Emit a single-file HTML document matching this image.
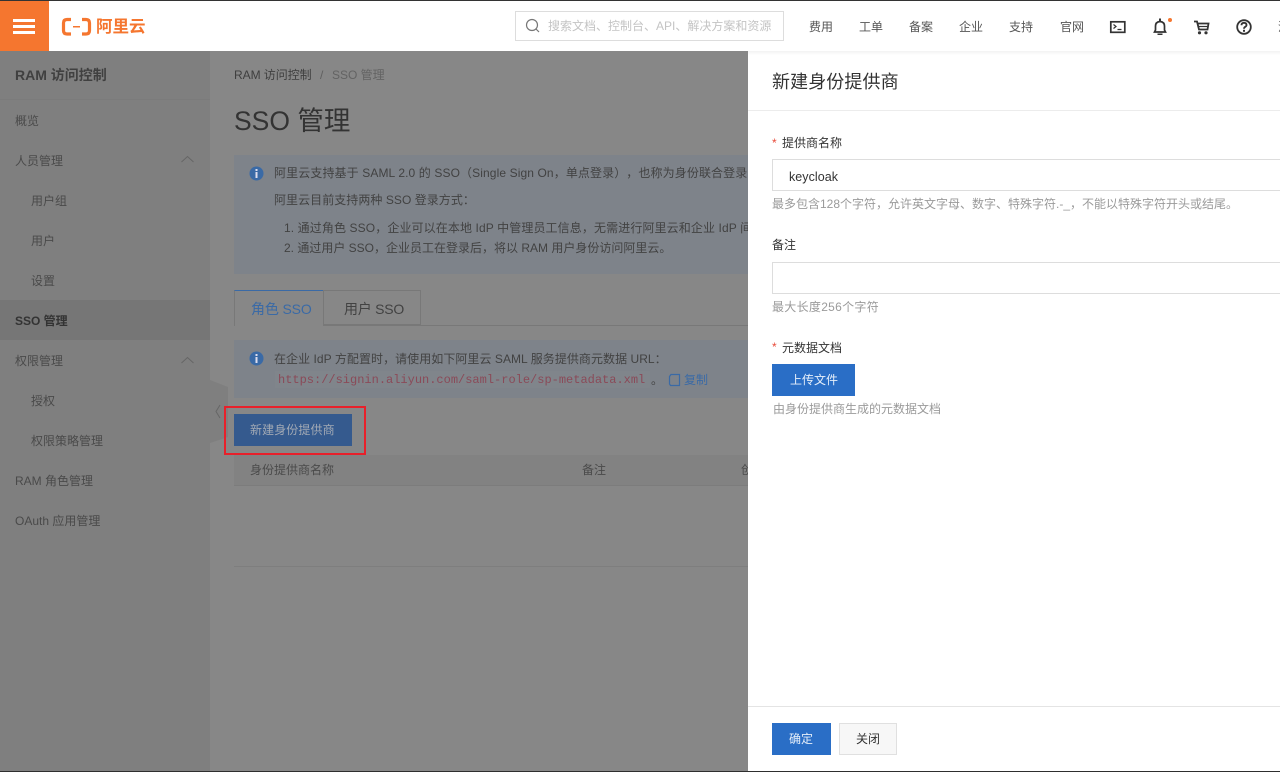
<!DOCTYPE html>
<html lang="zh-CN"><head><meta charset="utf-8"><title>SSO 管理</title>
<style>
html,body{margin:0;padding:0;width:1280px;height:772px;overflow:hidden;background:#878787}
body{position:relative;font-family:"Liberation Sans","Noto Sans CJK SC",sans-serif;font-size:12px;color:#333}
.a{position:absolute;white-space:nowrap;line-height:18px}
.b{position:absolute}
.m{color:#4a4a4a}
.t{color:#424242}
.h{color:#9a9a9a}
.l{color:#333}
</style></head><body>
<!-- sidebar -->
<div class="b" style="left:0;top:51px;width:210px;height:720px;background:#7f7f7f"></div>
<div class="b" style="left:0;top:99px;width:210px;height:1px;background:#7b7b7b"></div>
<div class="b" style="left:0;top:300px;width:210px;height:40px;background:#767676"></div>
<div class="a" style="left:15px;top:66px;font-size:14px;font-weight:bold;color:#404040">RAM 访问控制</div>
<div class="a m" style="left:15px;top:112px">概览</div>
<div class="a m" style="left:15px;top:152px">人员管理</div>
<div class="a m" style="left:31px;top:192px">用户组</div>
<div class="a m" style="left:31px;top:232px">用户</div>
<div class="a m" style="left:31px;top:272px">设置</div>
<div class="a" style="left:15px;top:312px;font-weight:bold;color:#333">SSO 管理</div>
<div class="a m" style="left:15px;top:352px">权限管理</div>
<div class="a m" style="left:31px;top:392px">授权</div>
<div class="a m" style="left:31px;top:432px">权限策略管理</div>
<div class="a m" style="left:15px;top:472px">RAM 角色管理</div>
<div class="a m" style="left:15px;top:512px">OAuth 应用管理</div>
<svg class="b" style="left:180px;top:154px" width="15" height="10"><path d="M1.500 8L7.500 2.500L13.500 8" fill="none" stroke="#666" stroke-width="1"/></svg>
<svg class="b" style="left:180px;top:355px" width="15" height="10"><path d="M1.500 8L7.500 2.500L13.500 8" fill="none" stroke="#666" stroke-width="1"/></svg>
<!-- collapse tab -->
<svg class="b" style="left:210px;top:380px" width="20" height="64"><path d="M0 0L18 7V57L0 63Z" fill="#7f7f7f"/><path d="M10 25L6 31.500L10 38" fill="none" stroke="#666" stroke-width="1"/></svg>
<!-- main -->
<div class="a" style="left:234px;top:66px;color:#3f3f3f;letter-spacing:-.05px">RAM 访问控制</div>
<div class="a" style="left:320px;top:66px;color:#5f5f5f">/</div>
<div class="a" style="left:332px;top:66px;color:#636363">SSO 管理</div>
<div class="a" style="left:234px;top:102px;font-size:26.500px;line-height:38px;color:#333">SSO 管理</div>
<!-- alert 1 -->
<div class="b" style="left:234px;top:155px;width:514px;height:119px;background:#7e838a"></div>
<svg class="b" style="left:249px;top:166px" width="15" height="15"><circle cx="7.500" cy="7.500" r="7" fill="#3a6aa6"/><rect x="6.500" y="3" width="2" height="2" fill="#dde"/><rect x="6.500" y="6" width="2" height="6" fill="#dde"/></svg>
<div class="b" style="left:274px;top:164px;width:474px;height:18px;overflow:hidden"><div class="a t" style="left:0;top:0;letter-spacing:.11px">阿里云支持基于 SAML 2.0 的 SSO（Single Sign On，单点登录<span style="letter-spacing:6px">）</span>，也称为身份联合登录</div></div>
<div class="a t" style="left:274px;top:191px;letter-spacing:.05px">阿里云目前支持两种 SSO 登录方式：</div>
<div class="b" style="left:284px;top:219px;width:464px;height:18px;overflow:hidden"><div class="a t" style="left:0;top:0;letter-spacing:.11px">1. 通过角色 SSO，企业可以在本地 IdP 中管理员工信息，无需进行阿里云和企业 IdP 间的</div></div>
<div class="a t" style="left:284px;top:239px">2. 通过用户 SSO，企业员工在登录后，将以 RAM 用户身份访问阿里云。</div>
<!-- tabs -->
<div class="b" style="left:234px;top:325px;width:514px;height:1px;background:#787878"></div>
<div class="b" style="left:234px;top:290px;width:89px;height:36px;background:#878787;border-top:1px solid #3a6aa6;border-left:1px solid #787878;box-sizing:border-box"></div>
<div class="b" style="left:323px;top:290px;width:98px;height:35px;border:1px solid #787878;box-sizing:border-box"></div>
<div class="a" style="left:251px;top:299px;font-size:14px;line-height:20px;color:#3a6aa6;letter-spacing:-.15px">角色 SSO</div>
<div class="a" style="left:344px;top:299px;font-size:14px;line-height:20px;color:#424242;letter-spacing:-.25px">用户 SSO</div>
<!-- alert 2 -->
<div class="b" style="left:234px;top:340px;width:514px;height:58px;background:#7e838a"></div>
<svg class="b" style="left:249px;top:351px" width="15" height="15"><circle cx="7.500" cy="7.500" r="7" fill="#3a6aa6"/><rect x="6.500" y="3" width="2" height="2" fill="#dde"/><rect x="6.500" y="6" width="2" height="6" fill="#dde"/></svg>
<div class="a t" style="left:274px;top:350px;letter-spacing:.05px">在企业 IdP 方配置时，请使用如下阿里云 SAML 服务提供商元数据 URL：</div>
<div class="b" style="left:275px;top:371px;width:375px;height:17px;background:#80858b"></div>
<div class="a" style="left:278px;top:371px;font-family:'Liberation Mono',monospace;font-size:12px;color:#8a4a58">https://signin.aliyun.com/saml-role/sp-metadata.xml</div>
<div class="a t" style="left:651px;top:371px">。</div>
<svg class="b" style="left:668px;top:373px" width="13" height="14"><path d="M3 1.500H11.500V12.500H2.500L1.500 11V3.500Z" fill="none" stroke="#3a6aa6" stroke-width="1.200"/></svg>
<div class="a" style="left:684px;top:371px;color:#3a6aa6">复制</div>
<!-- button -->
<div class="b" style="left:234px;top:414px;width:118px;height:32px;background:#355a8e"></div>
<div class="a" style="left:250px;top:421px;color:#a2a9b4;letter-spacing:.1px">新建身份提供商</div>
<div class="b" style="left:224px;top:406px;width:142px;height:49px;border:2px solid #e8202a;box-sizing:border-box"></div>
<!-- table -->
<div class="b" style="left:234px;top:455px;width:514px;height:31px;background:#828282;border-bottom:1px solid #7c7c7c;box-sizing:border-box"></div>
<div class="a m" style="left:250px;top:461px">身份提供商名称</div>
<div class="a m" style="left:582px;top:461px">备注</div>
<div class="b" style="left:741px;top:461px;width:7px;height:18px;overflow:hidden"><div class="a m" style="left:0;top:0">创建</div></div>
<div class="b" style="left:234px;top:566px;width:514px;height:1px;background:#7e7e7e"></div>
<!-- header -->
<div class="b" style="left:0;top:0;width:1280px;height:51px;background:#fff"></div>
<div class="b" style="left:0;top:0;width:49px;height:51px;background:#f5762f"></div>
<div class="b" style="left:13px;top:19px;width:22px;height:3px;background:#fff"></div>
<div class="b" style="left:13px;top:25px;width:22px;height:3px;background:#fff"></div>
<div class="b" style="left:13px;top:31px;width:22px;height:3px;background:#fff"></div>
<svg class="b" style="left:61px;top:17px" width="31" height="20"><path d="M10 2.500H6Q2.500 2.500 2.500 6V13.500Q2.500 17 6 17H10" fill="none" stroke="#f5762f" stroke-width="3.200"/><path d="M21 2.500H25Q28.500 2.500 28.500 6V13.500Q28.500 17 25 17H21" fill="none" stroke="#f5762f" stroke-width="3.200"/><rect x="12" y="9" width="7" height="1.500" fill="#f5762f"/></svg>
<div class="a" style="left:96px;top:16px;font-size:16.500px;line-height:22px;color:#f5762f;font-weight:bold">阿里云</div>
<div class="b" style="left:515px;top:11px;width:269px;height:30px;border:1px solid #ddd;box-sizing:border-box"></div>
<svg class="b" style="left:525px;top:18px" width="16" height="16"><circle cx="7" cy="7" r="5.500" fill="none" stroke="#777" stroke-width="1.200"/><path d="M11 11L14 14" stroke="#777" stroke-width="1.200"/></svg>
<div class="a" style="left:548px;top:17px;color:#c4c4c4">搜索文档、控制台、API、解决方案和资源</div>
<div class="a" style="left:809px;top:18px;color:#555">费用</div>
<div class="a" style="left:859px;top:18px;color:#555">工单</div>
<div class="a" style="left:909px;top:18px;color:#555">备案</div>
<div class="a" style="left:959px;top:18px;color:#555">企业</div>
<div class="a" style="left:1009px;top:18px;color:#555">支持</div>
<div class="a" style="left:1060px;top:18px;color:#555">官网</div>
<svg class="b" style="left:1109px;top:20px" width="17" height="14"><rect x="1.800" y="1.800" width="14" height="10.500" fill="none" stroke="#333" stroke-width="1.700"/><path d="M4.500 4.500L7 6.500L4.500 8.500M8.500 9.500H12.500" fill="none" stroke="#333" stroke-width="1.200"/></svg>
<svg class="b" style="left:1152px;top:18px" width="16" height="18"><path d="M2.500 14H13.500L12.500 12V8Q12.500 4 8 3.500Q3.500 4 3.500 8V12Z" fill="none" stroke="#333" stroke-width="1.700"/><rect x="7" y="0.500" width="2" height="2.500" fill="#333"/><rect x="5.500" y="15.500" width="5" height="1.500" fill="#333"/></svg>
<div class="b" style="left:1168px;top:18px;width:4px;height:4px;border-radius:50%;background:#f5762f"></div>
<svg class="b" style="left:1193px;top:20px" width="17" height="15"><path d="M1 1.500H4L6 9.500H14.500L15.500 3.500H4.500" fill="none" stroke="#333" stroke-width="1.800"/><path d="M4.500 6.500H15" stroke="#333" stroke-width="1.200"/><circle cx="6.500" cy="12.800" r="1.600" fill="#333"/><circle cx="13" cy="12.800" r="1.600" fill="#333"/></svg>
<svg class="b" style="left:1236px;top:19px" width="16" height="16"><circle cx="8" cy="8" r="6.800" fill="none" stroke="#333" stroke-width="1.800"/><path d="M5.500 6.300Q5.500 3.800 8 3.800Q10.500 3.800 10.500 6Q10.500 7.200 9.100 7.900Q8 8.500 8 9.800" fill="none" stroke="#333" stroke-width="1.800"/><rect x="7" y="10.800" width="2" height="2" fill="#333"/></svg>
<div class="a" style="left:1278px;top:18px;color:#555">消</div>
<!-- drawer -->
<div class="b" style="left:748px;top:51px;width:532px;height:721px;background:#fff"></div>
<div class="b" style="left:748px;top:51px;width:532px;height:4px;background:linear-gradient(#f3f3f3,#fff)"></div>
<div class="a" style="left:772px;top:70px;font-size:18px;line-height:24px;color:#333;letter-spacing:.1px">新建身份提供商</div>
<div class="b" style="left:748px;top:110px;width:532px;height:1px;background:#ececec"></div>
<div class="a" style="left:772px;top:134px;color:#e84b3a">*</div>
<div class="a l" style="left:782px;top:134px">提供商名称</div>
<div class="b" style="left:772px;top:159px;width:520px;height:32px;border:1px solid #ddd;box-sizing:border-box"></div>
<div class="a" style="left:789px;top:168px;color:#333;font-size:12.500px;letter-spacing:.05px">keycloak</div>
<div class="a h" style="left:772px;top:195px">最多包含128个字符，允许英文字母、数字、特殊字符.-_，不能以特殊字符开头或结尾。</div>
<div class="a l" style="left:772px;top:236px">备注</div>
<div class="b" style="left:772px;top:262px;width:520px;height:32px;border:1px solid #ddd;box-sizing:border-box"></div>
<div class="a h" style="left:772px;top:298px;letter-spacing:.3px">最大长度256个字符</div>
<div class="a" style="left:772px;top:338px;color:#e84b3a">*</div>
<div class="a l" style="left:782px;top:339px">元数据文档</div>
<div class="b" style="left:772px;top:364px;width:83px;height:32px;background:#2a6ec6"></div>
<div class="a" style="left:790px;top:371px;color:#e6effa">上传文件</div>
<div class="a h" style="left:773px;top:400px">由身份提供商生成的元数据文档</div>
<div class="b" style="left:748px;top:706px;width:532px;height:1px;background:#e4e4e4"></div>
<div class="b" style="left:772px;top:723px;width:59px;height:32px;background:#2a6ec6"></div>
<div class="a" style="left:789px;top:730px;color:#e6effa">确定</div>
<div class="b" style="left:839px;top:723px;width:58px;height:32px;background:#f7f7f7;border:1px solid #e0e0e0;box-sizing:border-box"></div>
<div class="a" style="left:856px;top:730px;color:#333">关闭</div>
<!-- window edges -->
<div class="b" style="left:0;top:0;width:1280px;height:1px;background:#333"></div>
<div class="b" style="left:0;top:771px;width:1280px;height:1px;background:#2e2e2e"></div>
</body></html>
